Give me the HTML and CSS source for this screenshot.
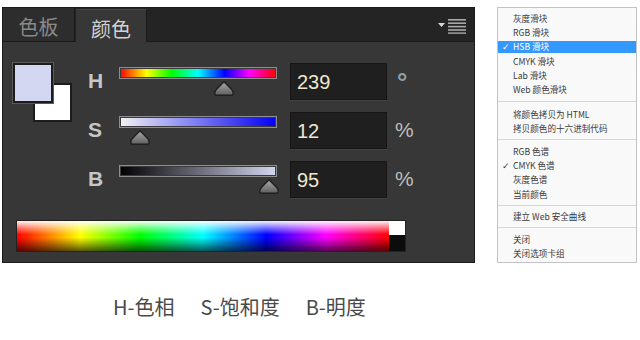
FILE: index.html
```html
<!DOCTYPE html>
<html lang="zh">
<head>
    <meta charset="UTF-8">
    <title>颜色面板</title>
    <link rel="stylesheet" href="styles.css">
</head>
<body>
    <div class="top">
        <!-- 左边：颜色面板 -->
        <div class="panel">
            <div class="tabs">
                <div class="tab">色板</div>
                <div class="tab active">颜色</div>
                <div class="tabs-fill">
                    <svg class="menu-btn" width="30" height="16" viewBox="0 0 30 16">
                        <path d="M1 5 L8 5 L4.5 9 Z" fill="#d8d8d8"/>
                        <rect x="11" y="1" width="18" height="1.6" fill="#a8a8a8"/>
                        <rect x="11" y="4.4" width="18" height="1.6" fill="#a8a8a8"/>
                        <rect x="11" y="7.8" width="18" height="1.6" fill="#a8a8a8"/>
                        <rect x="11" y="11.2" width="18" height="1.6" fill="#a8a8a8"/>
                        <rect x="11" y="14.4" width="18" height="1.4" fill="#a8a8a8"/>
                    </svg>
                </div>
            </div>

            <div class="body">
                <div class="main">
                    <!-- 前景色 / 背景色 -->
                    <div class="swatches">
                        <div class="sw back"></div>
                        <div class="sw front"></div>
                    </div>

                    <div class="rows">
                        <div class="row">
                            <span class="label">H</span>
                            <div class="slider">
                                <div class="bar hue"></div>
                                <div class="thumb" style="--v: 66.4%">
                                    <svg width="20" height="15" viewBox="0 0 20 15"><path d="M10 0.8 L17.2 8 Q19.2 10 19.2 12 L19.2 12.6 Q19.2 14.2 17.6 14.2 L2.4 14.2 Q0.8 14.2 0.8 12.6 L0.8 12 Q0.8 10 2.8 8 Z" fill="url(#tg)" stroke="#1f1f1f" stroke-width="1.4"/>
                                        <defs><linearGradient id="tg" x1="0" y1="0" x2="0" y2="1"><stop offset="0" stop-color="#a9a9a9"/><stop offset="1" stop-color="#5f5f5f"/></linearGradient></defs>
                                    </svg>
                                </div>
                            </div>
                            <div class="field">239</div>
                            <span class="unit deg">°</span>
                        </div>
                        <div class="row">
                            <span class="label">S</span>
                            <div class="slider">
                                <div class="bar sat"></div>
                                <div class="thumb" style="--v: 13%">
                                    <svg width="20" height="15" viewBox="0 0 20 15"><path d="M10 0.8 L17.2 8 Q19.2 10 19.2 12 L19.2 12.6 Q19.2 14.2 17.6 14.2 L2.4 14.2 Q0.8 14.2 0.8 12.6 L0.8 12 Q0.8 10 2.8 8 Z" fill="url(#tg)" stroke="#1f1f1f" stroke-width="1.4"/></svg>
                                </div>
                            </div>
                            <div class="field">12</div>
                            <span class="unit">%</span>
                        </div>
                        <div class="row">
                            <span class="label">B</span>
                            <div class="slider">
                                <div class="bar bri"></div>
                                <div class="thumb" style="--v: 95%">
                                    <svg width="20" height="15" viewBox="0 0 20 15"><path d="M10 0.8 L17.2 8 Q19.2 10 19.2 12 L19.2 12.6 Q19.2 14.2 17.6 14.2 L2.4 14.2 Q0.8 14.2 0.8 12.6 L0.8 12 Q0.8 10 2.8 8 Z" fill="url(#tg)" stroke="#1f1f1f" stroke-width="1.4"/></svg>
                                </div>
                            </div>
                            <div class="field">95</div>
                            <span class="unit">%</span>
                        </div>
                    </div>
                </div>

                <!-- 下面的色谱 -->
                <div class="spectrum">
                    <div class="ramp"></div>
                    <div class="bw">
                        <div class="w"></div>
                        <div class="k"></div>
                    </div>
                </div>
            </div>
        </div>

        <!-- 右边：弹出菜单 -->
        <ul class="menu">
            <li>灰度滑块</li>
            <li>RGB 滑块</li>
            <li class="on checked">HSB 滑块</li>
            <li>CMYK 滑块</li>
            <li>Lab 滑块</li>
            <li>Web 颜色滑块</li>
            <li class="sep first"></li>
            <li>将颜色拷贝为 HTML</li>
            <li>拷贝颜色的十六进制代码</li>
            <li class="sep"></li>
            <li>RGB 色谱</li>
            <li class="checked">CMYK 色谱</li>
            <li>灰度色谱</li>
            <li>当前颜色</li>
            <li class="sep"></li>
            <li>建立 Web 安全曲线</li>
            <li class="sep"></li>
            <li>关闭</li>
            <li>关闭选项卡组</li>
        </ul>
    </div>

    <p class="caption">
        <span>H-色相</span>
        <span>S-饱和度</span>
        <span>B-明度</span>
    </p>
</body>
</html>
```

FILE: styles.css
```css
* {
    margin: 0;
    padding: 0;
    box-sizing: border-box;
}

body {
    background: #fff;
    font-family: "Noto Sans CJK SC", "Noto Sans", sans-serif;
}

.top {
    display: flex;
    align-items: flex-start;
    gap: 22px;
    padding: 7px 0 0 2px;
}

/* 颜色面板 */
.panel {
    width: 473px;
    height: 256px;
    background: #373737;
    border: 1px solid #1b1b1b;
}

.tabs {
    height: 34px;
    display: flex;
    background: #242424;
}

.tab {
    width: 72px;
    display: flex;
    align-items: center;
    justify-content: center;
    padding-top: 4px;
    font-size: 20px;
    color: #8a8a8a;
    background: #2d2d2d;
    border-right: 1px solid #1a1a1a;
    border-bottom: 1px solid #1a1a1a;
}

.tab.active {
    width: 71px;
    margin-left: 1px;
    margin-top: 1px;
    color: #d2d2d2;
    background: #373737;
    border-top: 1px solid #454545;
    border-bottom: none;
}

.tabs-fill {
    flex: 1;
    display: flex;
    justify-content: flex-end;
    align-items: flex-start;
    padding: 10px 7px 0 0;
    border-bottom: 1px solid #1a1a1a;
}

.body {
    padding: 21px 0 0 10px;
}

.main {
    display: flex;
}

.swatches {
    display: grid;
    width: 60px;
}

.sw {
    grid-area: 1 / 1;
    width: 40px;
    height: 40px;
    border: 2px solid #1c1c1c;
}

.sw.back {
    margin: 20px 0 0 20px;
    width: 39px;
    height: 39px;
    background: #fff;
}

.sw.front {
    background: #d4d7f1;
    box-shadow: 0 0 0 1px #595959;
}

.rows {
    margin-left: 15px;
    display: flex;
    flex-direction: column;
    gap: 12px;
}

.row {
    height: 37px;
    display: flex;
}

.label {
    width: 31px;
    padding-top: 6px;
    font-family: "Liberation Sans", Arial, sans-serif;
    font-weight: bold;
    font-size: 21px;
    color: #c6c6c6;
}

.slider {
    width: 158px;
    padding-top: 4px;
}

.bar {
    height: 12px;
    border: 1px solid #8e8e8e;
    box-shadow: inset 0 0 0 1px #3a3a3a;
}

.hue {
    background: linear-gradient(to right, #f00, #ff0 17%, #0f0 33%, #0ff 50%, #00f 67%, #f0f 83%, #f00);
}

.sat {
    background: linear-gradient(to right, #f3f3f3, #0400f2);
}

.bri {
    background: linear-gradient(to right, #000, #d4d7f1);
}

.thumb {
    height: 15px;
    margin-top: 2px;
    margin-left: calc(var(--v) - 10px);
    width: 20px;
}

.thumb svg {
    display: block;
}

.field {
    width: 97px;
    margin-left: 13px;
    padding: 7px 0 0 6px;
    background: #1f1f1f;
    border: 1px solid #161616;
    box-shadow: 0 1px 0 #424242;
    font-family: "Liberation Sans", Arial, sans-serif;
    font-size: 20px;
    color: #eee6cf;
}

.unit {
    margin-left: 8px;
    padding-top: 6px;
    font-family: "Liberation Sans", Arial, sans-serif;
    font-size: 21px;
    color: #bdbdbd;
}

.unit.deg {
    margin-left: 10px;
    padding-top: 4px;
    font-size: 26px;
    font-weight: bold;
    color: #8fa0ae;
}

/* 色谱条 */
.spectrum {
    display: flex;
    width: 388px;
    height: 30px;
    margin: 23px 0 0 4px;
    box-shadow: 0 0 0 1px #222;
}

.ramp {
    flex: 1;
    background:
        linear-gradient(to bottom, rgba(255, 255, 255, .95), rgba(255, 255, 255, .4) 25%, rgba(255, 255, 255, 0) 45%, rgba(0, 0, 0, 0) 55%, rgba(0, 0, 0, .65)),
        linear-gradient(to right, #f00, #ff0 17%, #0f0 33%, #0ff 50%, #00f 67%, #f0f 83%, #f00);
}

.bw {
    width: 16px;
    display: flex;
    flex-direction: column;
}

.bw .w {
    height: 14px;
    background: #fff;
}

.bw .k {
    flex: 1;
    background: #0c0c0c;
}

/* 右侧菜单 */
.menu {
    list-style: none;
    display: flex;
    flex-direction: column;
    width: 140px;
    height: 256px;
    padding-top: 3px;
    background: #f9f9f9;
    border: 1px solid #c4c4c4;
    font-size: 8.6px;
    color: #3a3a3a;
}

.menu li {
    margin: 1.5px 0;
    height: 11.4px;
    line-height: 11.4px;
    padding-left: 15px;
    white-space: nowrap;
}

.menu li.checked::before {
    content: "✓";
    display: inline-block;
    width: 11px;
    margin-left: -11px;
    font-family: "DejaVu Sans", sans-serif;
    font-weight: bold;
    font-size: 9px;
}

.menu li.on {
    background: #3399ff;
    color: #fff;
}

.menu li.sep {
    height: 5px;
    margin: 3px 0 0;
    border-top: 1px solid #d6d6d6;
}

.menu li.sep.first {
    margin-top: 4px;
    height: 6px;
}

.caption {
    margin: 31px 0 0 113px;
    display: flex;
    gap: 26px;
    font-size: 20px;
    line-height: 26px;
    color: #4a4a4a;
}
```
